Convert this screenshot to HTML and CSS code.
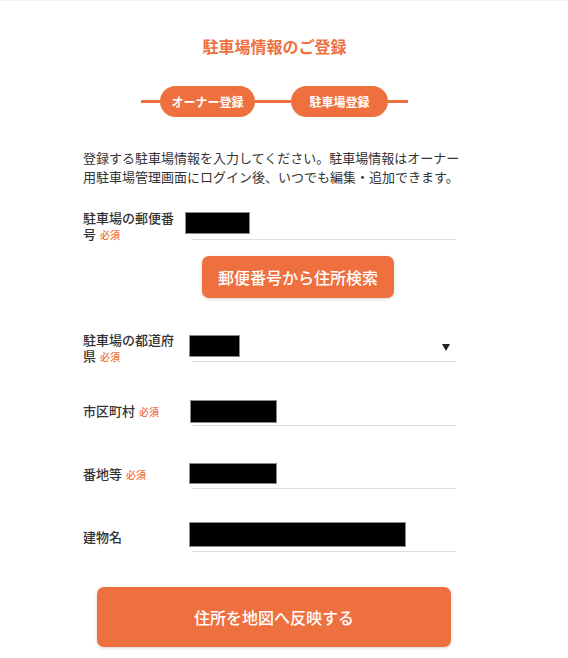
FILE: index.html
```html
<!DOCTYPE html>
<html lang="ja">
<head>
<meta charset="utf-8">
<title>駐車場情報のご登録</title>
<link rel="stylesheet" href="styles.css">
</head>
<body>
<div class="page">
  <main class="container">
    <h1 class="title">駐車場情報のご登録</h1>

    <div class="steps">
      <span class="seg seg-start"></span>
      <span class="pill pill-owner">オーナー登録</span>
      <span class="seg seg-mid"></span>
      <span class="pill pill-parking">駐車場登録</span>
      <span class="seg seg-end"></span>
    </div>

    <p class="lead">登録する駐車場情報を入力してください。駐車場情報はオーナー<br>用駐車場管理画面にログイン後、いつでも編集・追加できます。</p>

    <div class="row row-zip">
      <div class="label">駐車場の郵便番号<span class="req">必須</span></div>
      <div class="field">
        <div class="value"><span class="mask mask-zip"></span></div>
        <div class="line"></div>
      </div>
    </div>

    <button class="btn-search" type="button">郵便番号から住所検索</button>

    <div class="row row-pref">
      <div class="label">駐車場の都道府県<span class="req">必須</span></div>
      <div class="field">
        <div class="value select">
          <span class="mask mask-pref"></span>
          <span class="caret"></span>
        </div>
        <div class="line"></div>
      </div>
    </div>

    <div class="row row-city">
      <div class="label">市区町村<span class="req">必須</span></div>
      <div class="field">
        <div class="value"><span class="mask mask-city"></span></div>
        <div class="line"></div>
      </div>
    </div>

    <div class="row row-next">
      <div class="label">番地等<span class="req">必須</span></div>
      <div class="field">
        <div class="value"><span class="mask mask-addr"></span></div>
        <div class="line"></div>
      </div>
    </div>

    <div class="row row-next">
      <div class="label">建物名</div>
      <div class="field">
        <div class="value"><span class="mask mask-bldg"></span></div>
        <div class="line"></div>
      </div>
    </div>

    <button class="btn-map" type="button">住所を地図へ反映する</button>
  </main>
</div>
</body>
</html>
```

FILE: styles.css
```css
* { box-sizing: border-box; }

html, body {
  margin: 0;
  padding: 0;
  background: #ffffff;
}

body {
  font-family: "Noto Sans CJK JP", "Noto Sans", sans-serif;
  color: #333333;
}

.page {
  border-top: 1px solid #f0f0f0;
  min-height: 657px;
}

.container {
  width: 383px;
  margin-left: 83px;
  padding-top: 33px;
  display: flex;
  flex-direction: column;
}

.title {
  margin: 0;
  font-size: 16px;
  line-height: 24px;
  font-weight: 700;
  color: #ef703f;
  text-align: center;
}

.steps {
  margin-top: 28px;
  align-self: center;
  display: flex;
  align-items: center;
  height: 31px;
}

.seg {
  display: block;
  height: 3px;
  background: #ef703f;
}
.seg-start { width: 19px; }
.seg-mid { width: 36px; }
.seg-end { width: 20px; }

.pill {
  height: 31px;
  border-radius: 16px;
  background: #ef703f;
  color: #ffffff;
  font-size: 12px;
  font-weight: 700;
  display: flex;
  align-items: center;
  justify-content: center;
}
.pill-owner { width: 95px; }
.pill-parking { width: 97px; }

.lead {
  margin: 31px 0 0;
  font-size: 13px;
  line-height: 19px;
  color: #333333;
  white-space: nowrap;
}

.row {
  display: flex;
  align-items: center;
}
.row-zip { margin-top: 23.5px; }
.row-pref { margin-top: 34px; }
.row-city { margin-top: 33px; }
.row-next { margin-top: 34px; }

.label {
  width: 96px;
  margin-right: 10px;
  font-size: 13px;
  line-height: 16px;
  font-weight: 500;
  color: #333333;
}

.req {
  display: inline-block;
  margin-left: 4px;
  font-size: 10px;
  line-height: 10px;
  font-weight: 500;
  color: #ef703f;
}

.field {
  width: 277px;
}

.value {
  height: 24px;
  display: flex;
  align-items: flex-end;
}

.select {
  justify-content: space-between;
  align-items: center;
}

.mask {
  display: block;
  background: #000000;
  height: 22px;
  box-shadow: 0 0 0 1px #8a8a8a inset;
}
.mask-zip { width: 65px; margin-left: -4px; margin-bottom: 1px; }
.mask-pref { width: 51px; height: 22px; margin-top: 2px; }
.mask-city { width: 87px; height: 23px; margin-left: 1px; margin-bottom: -2px; }
.mask-addr { width: 88px; height: 21px; }
.mask-bldg { width: 217px; height: 25px; }

.caret {
  width: 0;
  height: 0;
  border-left: 4.5px solid transparent;
  border-right: 4.5px solid transparent;
  border-top: 7px solid #222222;
  margin-right: 16px;
  margin-top: 4px;
}

.line {
  height: 1px;
  margin-top: 4px;
  margin-left: 3px;
  margin-right: 10px;
  background: #dddddd;
}

.btn-search {
  margin: 14px 0 0 119px;
  width: 192px;
  height: 42px;
  border: none;
  border-radius: 7px;
  background: #ef703f;
  color: #ffffff;
  font-family: inherit;
  font-size: 16px;
  font-weight: 500;
  box-shadow: 0 1px 3px rgba(0, 0, 0, 0.18);
  padding: 0;
}

.btn-map {
  margin: 35px 0 0 14px;
  width: 354px;
  height: 60px;
  border: none;
  border-radius: 7px;
  background: #ef703f;
  color: #ffffff;
  font-family: inherit;
  font-size: 16px;
  font-weight: 500;
  box-shadow: 0 1px 3px rgba(0, 0, 0, 0.18);
  padding: 0;
}
```
